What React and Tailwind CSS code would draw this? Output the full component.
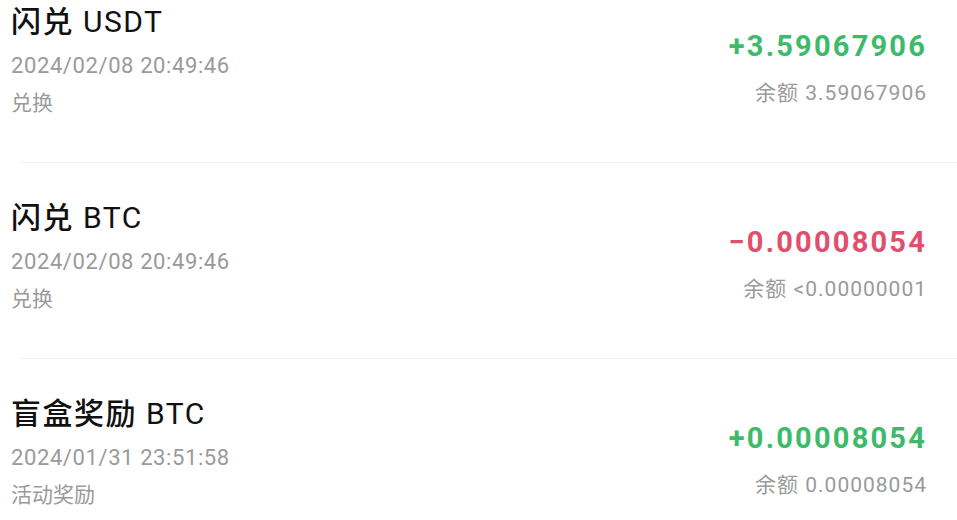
import React from 'react';

const records = [
  {
    name: '闪兑',
    coin: 'USDT',
    time: '2024/02/08 20:49:46',
    type: '兑换',
    amount: '+3.59067906',
    balance: '3.59067906',
    positive: true,
  },
  {
    name: '闪兑',
    coin: 'BTC',
    time: '2024/02/08 20:49:46',
    type: '兑换',
    amount: '−0.00008054',
    balance: '<0.00000001',
    positive: false,
  },
  {
    name: '盲盒奖励',
    coin: 'BTC',
    time: '2024/01/31 23:51:58',
    type: '活动奖励',
    amount: '+0.00008054',
    balance: '0.00008054',
    positive: true,
  },
];

const RecordRow = ({ item, first }) => (
  <div className={first ? '' : 'mt-[33px]'}>
    <div className="flex justify-between pl-[11px] pr-[30px] pb-[44px]">
      <div className="flex flex-col">
        <p className="text-[30px] leading-[44px] tracking-[1.5px] text-[#111]">
          <span className="font-medium">{item.name}</span> {item.coin}
        </p>
        <p className="text-[22px] leading-[44px] tracking-[0.6px] text-[#9a9a9a]">{item.time}</p>
        <p className="text-[21px] leading-[30px] text-[#9a9a9a]">{item.type}</p>
      </div>
      <div className="flex flex-col items-end pt-[26px]">
        <p
          className={`text-[29px] leading-[40px] font-bold tracking-[2.2px] ${
            item.positive ? 'text-[#3dba6a]' : 'text-[#e0506e]'
          }`}
        >
          {item.amount}
        </p>
        <p className="mt-[10px] text-[21px] leading-[34px] tracking-[1px] text-[#9a9a9a]">余额 {item.balance}</p>
      </div>
    </div>
    <div className="ml-[20px] border-t border-[#f0f0f0]" />
  </div>
);

export default function App() {
  return (
    <div
      className="w-[957px] h-[520px] overflow-hidden bg-white"
      style={{ fontFamily: 'Roboto, "Noto Sans CJK SC", sans-serif' }}
    >
      {records.map((item, i) => (
        <RecordRow key={i} item={item} first={i === 0} />
      ))}
    </div>
  );
}
